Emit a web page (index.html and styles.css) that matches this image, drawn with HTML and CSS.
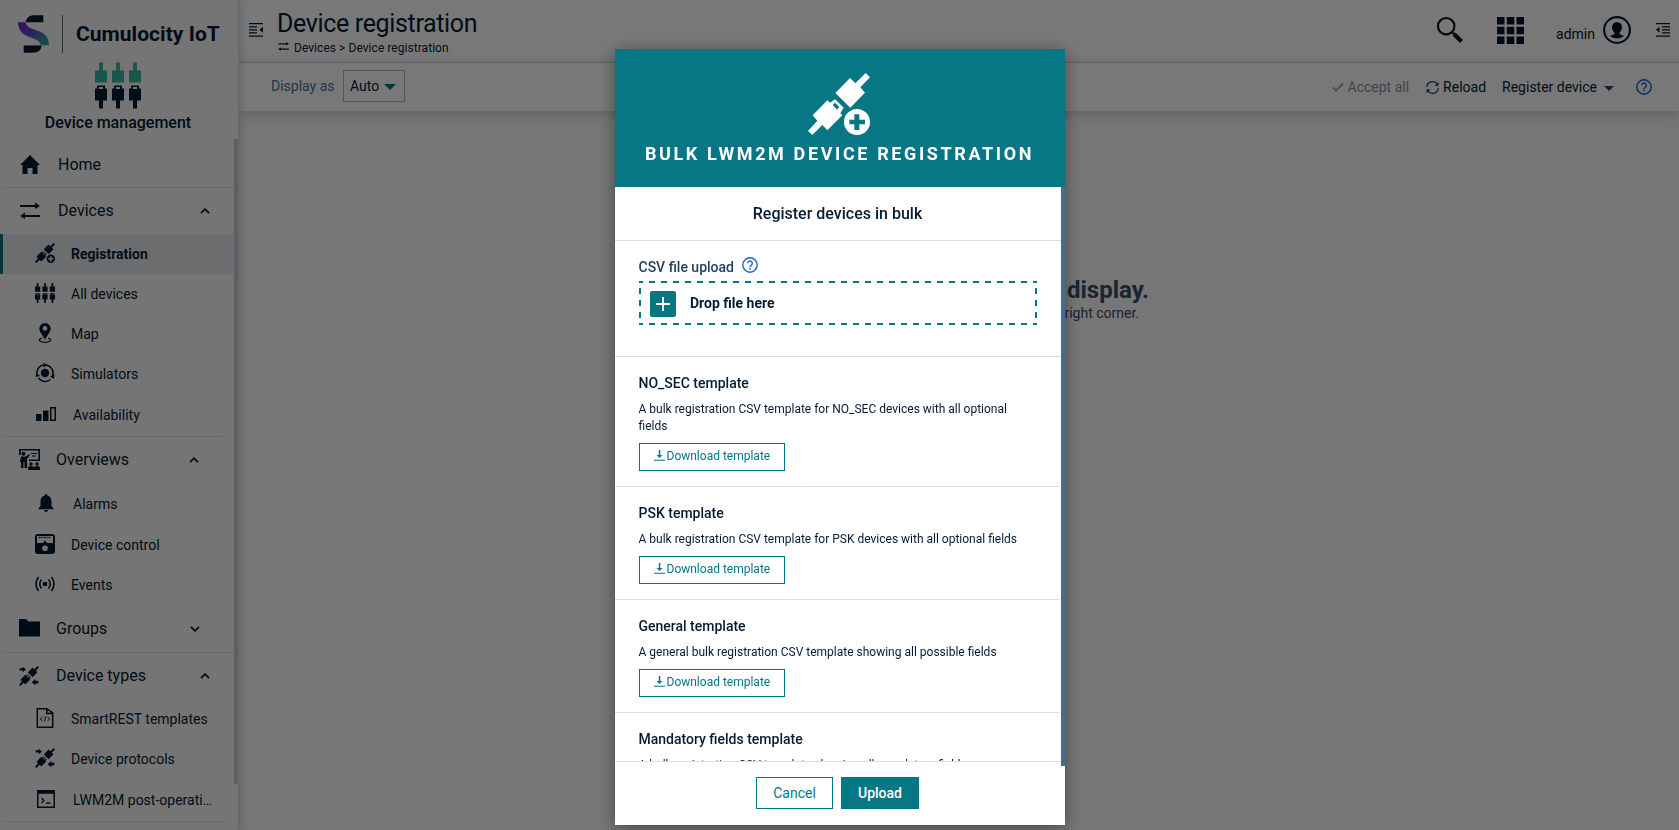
FILE: index.html
```html
<!DOCTYPE html>
<html lang="en">
<head>
<meta charset="utf-8">
<title>Device registration</title>
<link rel="stylesheet" href="styles.css">
</head>
<body>
<svg class="defs" aria-hidden="true">
  <symbol id="plugs" viewBox="0 0 186 186">
    <path d="M126 15 142 31 173 0 186 13 157 43 171 59 127 104 82 60Z"/>
    <path d="M58 82 66 89 81 79 107 104 97 121 103 127 58 172 43 156 13 186 0 174 28 143 14 127ZM81 89 74 96 87 110 94 102Z" fill-rule="evenodd"/>
  </symbol>
  <symbol id="plug-add" viewBox="0 0 186 186">
    <use href="#plugs" width="186" height="186"/>
    <path fill-rule="evenodd" d="M147 108a39 39 0 1 0 0 78 39 39 0 0 0 0-78ZM139 124h15v16h17v14h-17v17h-15v-17h-15v-14h15Z"/>
  </symbol>
  <symbol id="protocol" viewBox="0 0 186 186">
    <use href="#plugs" width="186" height="186"/>
    <path d="M6 22h28V6l32 26-32 26V42H6ZM180 138h-28v-16l-34 28 34 28v-16h28Z"/>
  </symbol>
  <symbol id="devices" viewBox="0 0 46 46">
    <path class="top-plug" d="M4 0h4v8h4v12H0V8h4ZM21 0h4v8h4v12H17V8h4ZM38 0h4v8h4v12H34V8h4Z"/>
    <path fill-rule="evenodd" d="M2 23h8v3h2v12H8v8H4v-8H0V26h2ZM4 24.500v2h4v-2ZM19 23h8v3h2v12h-4v8h-4v-8h-4V26h2ZM21 24.500v2h4v-2ZM36 23h8v3h2v12h-4v8h-4v-8h-4V26h2ZM38 24.500v2h4v-2Z"/>
  </symbol>
  <symbol id="arrows" viewBox="0 0 20 17">
    <path d="M0 2.500h15V0l5 3.500-5 3V4.500H0ZM20 12.500H5V10l-5 3.500 5 3V14.500h15Z"/>
  </symbol>
  <symbol id="help" viewBox="0 0 16 16">
    <circle cx="8" cy="8" r="7.200" fill="none" stroke="currentColor" stroke-width="1.400"/>
    <path d="M5.700 6.300a2.300 2.300 0 1 1 3.500 2C8.300 8.900 8 9.200 8 10.200" fill="none" stroke="currentColor" stroke-width="1.400"/>
    <path d="M7.300 11h1.500v1.500H7.300Z"/>
  </symbol>
  <symbol id="outdent" viewBox="0 0 14 14">
    <path d="M0 0h14v1.300H0ZM0 3.200h8v1.300H0ZM0 6.200h8v1.300H0ZM0 9.200h8v1.300H0ZM0 12.400h14v1.300H0ZM14 3.800v6L10.500 6.800Z"/>
  </symbol>
  <symbol id="indent" viewBox="0 0 14 14">
    <path d="M0 0h14v1.300H0ZM6 3.200h8v1.300H6ZM6 6.200h8v1.300H6ZM6 9.200h8v1.300H6ZM0 12.400h14v1.300H0ZM3.500 3.800v6L0 6.800Z"/>
  </symbol>
  <symbol id="chevron" viewBox="0 0 10 6"><path d="M1 5.200 5 1.200 9 5.200" fill="none" stroke="currentColor" stroke-width="1.800"/></symbol>
  <symbol id="download" viewBox="0 0 11 11"><path d="M4.800 0h1.500v5h2.200L5.500 8 2.600 5h2.200ZM0 9.800h11v1H0Z"/></symbol>
</svg>

<div class="app">
  <aside class="sidebar">
    <div class="brand">
      <svg class="logo" viewBox="55 45 93 113">
        <defs><linearGradient id="ribbon" x1="0" y1="0" x2="1" y2="1"><stop offset="0" stop-color="#7a1fd0"/><stop offset=".35" stop-color="#6440c8"/><stop offset=".75" stop-color="#3a8fa8"/><stop offset="1" stop-color="#18a890"/></linearGradient></defs>
        <path d="M131 45V66H78Q80 46 102 45ZM72 158V136H126Q124 157 100 158Z"/>
        <path fill="url(#ribbon)" d="M55 66H78C82 98 148 78 148 135H123C120 105 57 121 55 66Z"/>
      </svg>
      <span class="brand-line"></span>
      <span class="brand-name">Cumulocity IoT</span>
    </div>
    <div class="module">
      <svg class="module-icon"><use href="#devices"/></svg>
      <span>Device management</span>
    </div>
    <nav class="nav">
      <div class="item home"><svg class="i-home" viewBox="0 0 20 19"><path d="M10 0 20 10h-2.500v9h-5v-6h-5v6h-5v-9H0Z"/></svg><span>Home</span></div>
      <div class="item group ruled"><svg class="i-arrows"><use href="#arrows"/></svg><span>Devices</span><svg class="chev"><use href="#chevron"/></svg></div>
      <div class="item sub active"><svg><use href="#plug-add"/></svg><span>Registration</span></div>
      <div class="item sub"><svg><use href="#devices"/></svg><span>All devices</span></div>
      <div class="item sub"><svg viewBox="0 0 20 20"><path fill-rule="evenodd" d="M10 0a5.700 5.700 0 0 0-5.700 5.700C4.300 9 8 12 10 17c2-5 5.700-8 5.700-11.300A5.700 5.700 0 0 0 10 0Zm0 3a2.400 2.400 0 1 1 0 4.800A2.400 2.400 0 0 1 10 3Z"/><path d="M6.800 15C2 17 5 19.300 10 19.300s8-2.300 3.200-4.300" fill="none" stroke="currentColor" stroke-width="1.300"/></svg><span>Map</span></div>
      <div class="item sub"><svg viewBox="0 0 20 20"><circle cx="10" cy="10" r="4.200"/><g fill="none" stroke="currentColor" stroke-width="1.500"><path d="M11 2a8.200 8.200 0 0 1 6.500 11"/><path d="M15.500 16.500a8.200 8.200 0 0 1-12-1.500"/><path d="M2 12A8.200 8.200 0 0 1 8.500 2"/></g><path d="M8.500-.5 12 2 8.500 4.500ZM19.500 11.500l-.5 4.500-4-2.500ZM.5 14l1-4 3.500 3Z"/></svg><span>Simulators</span></div>
      <div class="item sub shifted"><svg viewBox="0 0 20 20"><path fill-rule="evenodd" d="M0 10h5.500v7H0ZM7 6.500h5.500V17H7ZM14 3h6v14h-6ZM15.500 4.500v11h3v-11Z"/></svg><span>Availability</span></div>
      <div class="item group ruled short inset"><svg viewBox="0 0 21 21"><path d="M0 0h21v12H10v-1.500h9.300V1.600H1.800V6H0Z"/><circle cx="4.500" cy="4.800" r="2"/><path d="M2 7.500h5L10 5l1 1-3 4v9H5.500v-6h-1v6H2v-6H1ZM12 4h6v1.100h-6ZM13 6.400h4v1h-4Z"/><circle cx="12" cy="15" r="1.700"/><circle cx="18" cy="15" r="1.700"/><path d="M9 21v-2q0-2 3-2t3 1.500q0-1.500 3-1.500t3 2v2Z"/></svg><span>Overviews</span><svg class="chev"><use href="#chevron"/></svg></div>
      <div class="item sub shifted"><svg viewBox="0 0 20 20"><path d="M10 1c1 0 1.300.6 1.300 1.500C14.500 3.300 15.500 6 15.500 9v4l2 2.500v.7h-15v-.7l2-2.500V9c0-3 1-5.700 4.200-6.500C8.700 1.600 9 1 10 1ZM8 17h4q-.3 2-2 2T8 17Z"/></svg><span>Alarms</span></div>
      <div class="item sub"><svg viewBox="0 0 20 20"><path fill-rule="evenodd" d="M3 0h14a3 3 0 0 1 3 3v14a3 3 0 0 1-3 3H3a3 3 0 0 1-3-3V3a3 3 0 0 1 3-3ZM2 2v7h5.500L9 8l1-2 1 2 1.500 1H18V2ZM10 11.500a2.800 2.800 0 1 0 0 5.600 2.800 2.800 0 0 0 0-5.600Z"/><path d="M4 3.500h12" stroke="currentColor" stroke-width="1.500" stroke-dasharray="1 .7"/></svg><span>Device control</span></div>
      <div class="item sub"><svg viewBox="0 0 20 20"><circle cx="10" cy="10" r="2.300"/><g fill="none" stroke="currentColor" stroke-width="1.600"><path d="M6.500 5.500q-3.500 4.500 0 9M13.500 5.500q3.500 4.500 0 9M3.500 3q-5 7 0 14M16.500 3q5 7 0 14"/></g></svg><span>Events</span></div>
      <div class="item group inset"><svg viewBox="0 0 21 21"><path d="M0 1h7l2.500 2.500H21V18.500H0Z"/></svg><span>Groups</span><svg class="chev down"><use href="#chevron"/></svg></div>
      <div class="item group ruled types"><svg><use href="#protocol"/></svg><span>Device types</span><svg class="chev"><use href="#chevron"/></svg></div>
      <div class="item sub"><svg viewBox="0 0 20 20"><path d="M2.300.7h9.500L17.700 5v14.300H2.300ZM11.800 1v4.500h5.500" fill="none" stroke="currentColor" stroke-width="1.500"/><path d="m7.500 9-2.200 2 2.200 2M12.500 9l2.200 2-2.200 2M10.800 8.500l-1.500 5" fill="none" stroke="currentColor"/></svg><span>SmartREST templates</span></div>
      <div class="item sub"><svg><use href="#protocol"/></svg><span>Device protocols</span></div>
      <div class="item sub shifted"><svg viewBox="0 0 20 20"><path fill-rule="evenodd" d="M1 1h18v18H1ZM2.500 4.800v12.700h15V4.800Z"/><path d="m5.500 9 2.500 2.500L5.500 14M10 14h4.500" fill="none" stroke="currentColor" stroke-width="1.300"/></svg><span>LWM2M post-operati…</span></div>
      <div class="nav-end"></div>
    </nav>
  </aside>
  <main class="main">
    <header class="header">
      <svg class="i-toggle"><use href="#outdent"/></svg>
      <div class="heading">
        <h1>Device registration</h1>
        <div class="crumbs"><svg><use href="#arrows"/></svg><span>Devices &gt; Device registration</span></div>
      </div>
      <div class="tools">
        <svg class="i-search" viewBox="0 0 26 26"><circle cx="9.200" cy="9.200" r="8.200" fill="none" stroke="currentColor" stroke-width="2.200"/><path d="m15 15 2 2" stroke="currentColor" stroke-width="2.200"/><path d="m17 17 7.500 7.500" fill="none" stroke="currentColor" stroke-width="4"/></svg>
        <svg class="i-grid" viewBox="0 0 27 27"><path d="M0 0h7.500v7.500H0ZM9.800 0h7.500v7.500H9.800ZM19.500 0H27v7.500h-7.500ZM0 9.800h7.500v7.500H0ZM9.800 9.800h7.500v7.500H9.800ZM19.500 9.800H27v7.500h-7.500ZM0 19.500h7.500V27H0ZM9.800 19.500h7.500V27H9.800ZM19.500 19.500H27V27h-7.500Z"/></svg>
        <span class="user">admin</span>
        <svg class="i-user" viewBox="0 0 28 28"><circle cx="14" cy="14" r="12.900" fill="none" stroke="currentColor" stroke-width="2.100"/><path d="M14 6.300c3.400 0 5 2.200 5 5 0 2-1.100 4-2.400 5.200v1.500c1 1 3 1 4.600 2.100Q18 22.500 14 22.500t-7.200-2.400c1.600-1.100 3.600-1.100 4.600-2.100v-1.500C10.100 15.300 9 13.300 9 11.300c0-2.800 1.600-5 5-5Z"/></svg>
        <svg class="i-toggle right"><use href="#indent"/></svg>
      </div>
    </header>
    <div class="actionbar">
      <span class="muted">Display as</span>
      <div class="select"><span>Auto</span><i class="caret"></i></div>
      <div class="actions">
        <div class="action off"><svg viewBox="0 0 12 12"><path d="m1 6.500 3 3L11 2.500" fill="none" stroke="currentColor" stroke-width="1.700"/></svg><span>Accept all</span></div>
        <div class="action reload"><svg viewBox="0 0 14 14"><path d="M.8 6.500a6.200 6.200 0 0 1 11.400-3M13.200 7.500a6.200 6.200 0 0 1-11.400 3" fill="none" stroke="currentColor" stroke-width="1.400"/><path d="M13.500.8V5H9.300ZM.5 13.200V9h4.200Z"/></svg><span>Reload</span></div>
        <div class="action register"><span>Register device</span><i class="caret small"></i></div>
        <svg class="i-help"><use href="#help"/></svg>
      </div>
    </div>
    <section class="empty">
      <h2>No devices to display.</h2>
      <p>Register a device from the top right corner.</p>
    </section>
  </main>
</div>

<div class="backdrop">
  <div class="modal">
    <div class="modal-head">
      <svg><use href="#plug-add"/></svg>
      <h3>BULK LWM2M DEVICE REGISTRATION</h3>
    </div>
    <div class="modal-body">
      <div class="subtitle">Register devices in bulk</div>
      <div class="upload">
        <div class="label"><span>CSV file upload</span><svg><use href="#help"/></svg></div>
        <div class="drop"><span class="plus"><svg viewBox="0 0 14 14"><path d="M6 0h2v6h6v2H8v6H6V8H0V6h6Z"/></svg></span><b>Drop file here</b></div>
      </div>
      <div class="tpl"><h4>NO_SEC template</h4><p>A bulk registration CSV template for NO_SEC devices with all optional fields</p><button><svg><use href="#download"/></svg>Download template</button></div>
      <div class="tpl"><h4>PSK template</h4><p>A bulk registration CSV template for PSK devices with all optional fields</p><button><svg><use href="#download"/></svg>Download template</button></div>
      <div class="tpl"><h4>General template</h4><p>A general bulk registration CSV template showing all possible fields</p><button><svg><use href="#download"/></svg>Download template</button></div>
      <div class="tpl last"><h4>Mandatory fields template</h4><p>A bulk registration CSV template showing all mandatory fields</p></div>
    </div>
    <div class="modal-foot">
      <button class="cancel">Cancel</button><button class="primary">Upload</button>
    </div>
    <div class="thumb"></div>
  </div>
</div>
</body>
</html>
```
FILE: styles.css
```css
* { box-sizing: border-box; }
body { margin: 0; width: 1679px; height: 830px; overflow: hidden; font: 14px/20px Roboto, sans-serif; color: #051b33; }
svg { fill: currentColor; flex: none; display: block; overflow: visible; }
h1, h2, h3, h4, p { margin: 0; }
button { font: inherit; }
.defs { position: absolute; width: 0; height: 0; }

.app { display: flex; height: 830px; background: #fafafa; }

.sidebar { width: 239px; height: 830px; overflow: hidden; background: #f8f8f8; border-right: 1px solid #dcdee5; box-shadow: 0 0 10px rgba(60, 80, 110, .3); position: relative; z-index: 2; color: #031b30; }
.brand { height: 62px; padding: 15px 0 0 18px; display: flex; align-items: flex-start; }
.logo { width: 31px; height: 38px; }
.brand-line { width: 1px; height: 38px; margin: 0 13px 0 13px; background: #4a6a90; }
.brand-name { font-size: 21px; line-height: 38px; font-weight: 700; letter-spacing: .04px; }
.module { height: 77px; display: flex; flex-direction: column; align-items: center; padding-right: 2px; font-size: 16px; font-weight: 500; }
.module-icon { width: 46px; height: 47px; margin-bottom: 4px; --plug: #38b8a0; }
.top-plug { fill: var(--plug, currentColor); }
.nav { padding-top: 3px; height: 691px; background: linear-gradient(#c9cbce, #c9cbce) 234px 0 / 4px 645px no-repeat; }
.item { display: flex; align-items: center; width: 234px; height: 40px; }
.home, .group { height: 47px; font-size: 16px; padding-left: 20px; }
.home svg, .group > svg:first-child { width: 20px; height: 20px; margin-right: 18px; }
.home { height: 45px; }
.home .i-home { height: 19px; }
.group .i-arrows { height: 17px; }
.group.inset, .group.types { padding-left: 19px; }
.group.inset > svg:first-child { width: 21px; height: 21px; margin-right: 16px; }
.group.types > svg:first-child { margin-right: 17px; }
.ruled { background: linear-gradient(#dcdee5, #dcdee5) 3px 0 / 231px 1px no-repeat; }
.ruled.short { background-size: 220px 1px; }
.item .chev { width: 10px; height: 6px; margin-left: auto; margin-right: 24px; }
.inset .chev { margin-right: 35px; }
.inset .chev.down { transform: rotate(180deg); margin-right: 34px; }
.sub { padding-left: 35px; }
.sub svg { width: 20px; height: 20px; margin-right: 16px; margin-bottom: 2px; }
.sub.shifted { height: 42px; padding-left: 36px; }
.sub.shifted svg { margin-right: 17px; }
.active { background: #e5e8ec; font-weight: 700; border-left: 3px solid #077685; padding-left: 32px; }
.nav-end { width: 220px; height: 1px; margin-left: 3px; background: #dcdee5; }

.main { flex: 1; }
.header { height: 63px; border-bottom: 1px solid #d5d7dd; background: #fff; display: flex; }
.i-toggle { width: 14px; height: 14px; margin: 23px 14px 0 10px; }
.heading { padding: 9px 0 0 1px; }
h1 { font-size: 25px; line-height: 30px; font-weight: 400; letter-spacing: -.35px; margin-left: -1px; }
.crumbs { display: flex; align-items: center; font-size: 12px; line-height: 18px; }
.crumbs svg { width: 11px; height: 9px; margin: 0 5px 3px 0; }
.crumbs span { letter-spacing: .05px; }
.tools { margin-left: auto; display: flex; color: #031728; }
.i-search { width: 26px; height: 26px; margin: 17px 34px 0 0; }
.i-grid { width: 27px; height: 27px; margin: 17px 32px 0 0; }
.user { margin: 24px 8px 0 0; }
.i-user { width: 28px; height: 28px; margin-top: 16px; }
.i-toggle.right { margin: 23px 9px 0 25px; }
.actionbar { height: 48px; padding: 7px 27px 0 32px; background: #fff; display: flex; box-shadow: 0 2px 12px rgba(60, 70, 90, .28); }
.actionbar > .muted { color: #52719c; line-height: 33px; width: 72px; }
.select { width: 62px; height: 32px; border: 1px solid #b5bac9; padding-left: 6px; display: flex; align-items: center; gap: 5px; }
.caret { border: 6px solid transparent; border-top-color: #077685; border-bottom: 0; margin-top: 1px; }
.caret.small { border-width: 5px 5px 0; border-top-color: #24466e; margin: 3px 0 0 7px; }
.actions { margin-left: auto; display: flex; align-items: center; height: 34px; }
.action { display: flex; align-items: center; }
.action svg { width: 12px; height: 12px; margin-right: 4px; }
.off { color: #8a94a5; margin-right: 17px; }
.reload { margin-right: 16px; }
.reload svg { width: 13px; height: 13px; color: #24466e; }
.i-help { width: 16px; height: 16px; margin-left: 22px; color: #1763cf; }
.empty { width: 720px; padding: 164px 0 0 0; margin-left: 192px; text-align: right; color: #35506f; }
h2 { font-size: 24px; line-height: 30px; font-weight: 700; margin-right: 2px; }
.empty p { margin: -2px 12px 0 0; }

.backdrop { position: fixed; inset: 0; z-index: 10; background: rgba(0, 0, 0, .53); display: flex; justify-content: center; align-items: flex-start; padding: 49px 0 0 1px; }
.modal { position: relative; width: 450px; height: 776px; background: #fff; display: flex; flex-direction: column; box-shadow: 0 3px 16px rgba(0, 0, 0, .4); }
.modal-head { height: 138px; padding-top: 24px; flex: none; background: #077685; color: #fff; display: flex; flex-direction: column; align-items: center; }
.modal-head svg { width: 62px; height: 62px; margin-right: 2px; }
h3 { font-size: 18px; line-height: 24px; font-weight: 700; letter-spacing: 2.62px; margin: 7px 1px 0 0; white-space: nowrap; }
.modal-body { height: 574px; overflow: hidden; width: 446px; }
.subtitle { height: 54px; border-bottom: 1px solid #dcdee5; text-align: center; font-size: 16px; line-height: 53px; font-weight: 500; padding-right: 1px; }
.upload { height: 116px; border-bottom: 1px solid #dcdee5; padding: 16px 24px 0; }
.label { display: flex; height: 24px; font-weight: 500; line-height: 20px; color: #24405f; }
.label span { margin-left: -.5px; }
.label svg { width: 16px; height: 16px; margin: 0 0 0 8px; color: #1763cf; }
.drop {
  --dash: #077685 0 6px, transparent 6px 12px;
  width: 398px; height: 44px; display: flex; align-items: center; padding: 1px 0 0 11px;
  background:
    repeating-linear-gradient(90deg, var(--dash)) -2px 0 / 400px 2px no-repeat,
    repeating-linear-gradient(90deg, var(--dash)) -2px 100% / 400px 2px no-repeat,
    repeating-linear-gradient(180deg, var(--dash)) 0 -5px / 2px 54px no-repeat,
    repeating-linear-gradient(180deg, var(--dash)) 100% -5px / 2px 54px no-repeat;
}
.drop b { margin-top: -2px; }
.plus { width: 26px; height: 26px; border-radius: 2px; background: #077685; color: #fff; display: flex; align-items: center; justify-content: center; margin-right: 14px; }
.plus svg { width: 14px; height: 14px; }
.tpl { padding: 16px 37px 15px 24px; border-bottom: 1px solid #dcdee5; width: 445px; }
.tpl.last { padding-bottom: 0; border: 0; }
h4 { font-size: 14px; line-height: 20px; font-weight: 500; margin: 0 0 8px -.5px; }
.tpl p { font-size: 12px; line-height: 17px; margin: 0 0 8px -.5px; }
.tpl button { width: 146px; height: 28px; padding: 0 0 3px 14px; border: 1px solid #077685; background: #fff; color: #077685; font-size: 12px; display: flex; align-items: center; white-space: nowrap; }
.tpl svg { width: 11px; height: 11px; margin-right: 1.500px; }
.modal-foot { height: 64px; flex: none; border-top: 1px solid #dcdee5; padding: 15px 0 0 141px; display: flex; gap: 8px; }
.modal-foot button { width: 77px; height: 32px; border: 1px solid #077685; background: #fff; color: #077685; padding: 0; }
.modal-foot .primary { width: 78px; background: #077685; color: #fff; font-weight: 500; }
.thumb { position: absolute; right: 0; top: 138px; width: 4px; height: 579px; background: #4a6a8c; }
```
